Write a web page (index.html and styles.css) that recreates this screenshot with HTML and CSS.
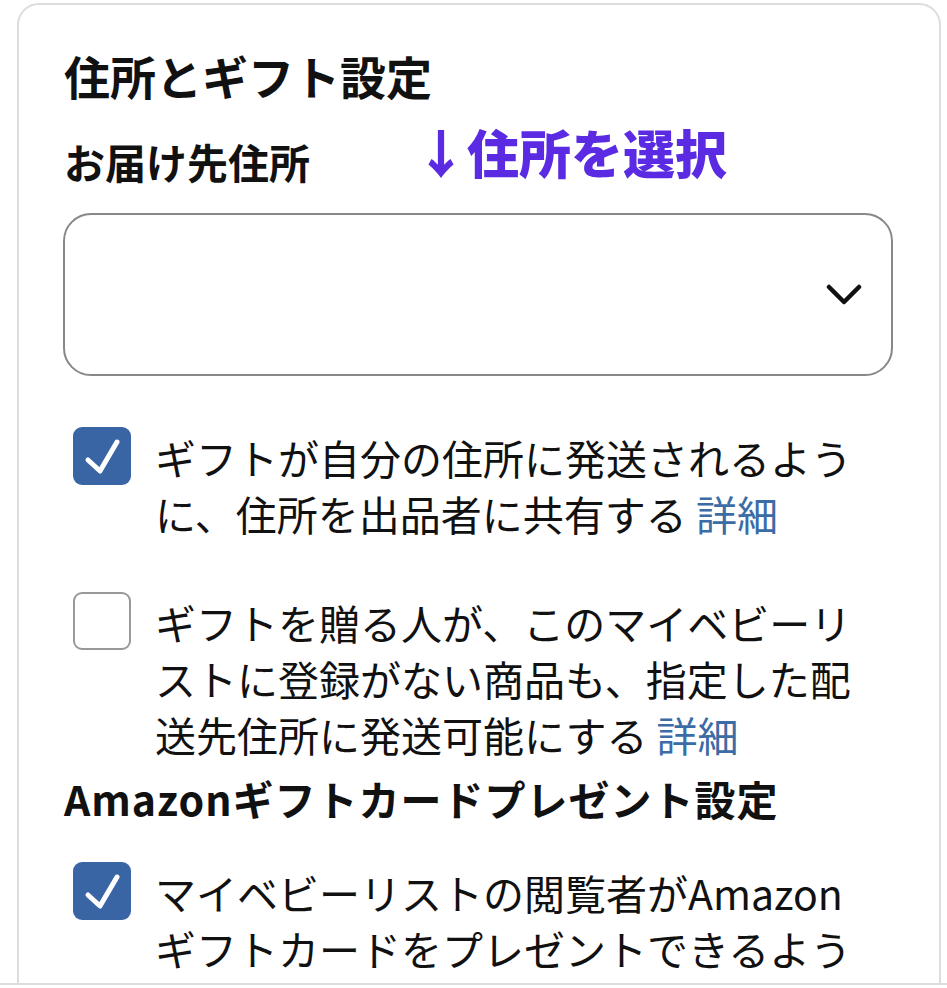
FILE: index.html
```html
<!DOCTYPE html>
<html lang="ja">
  <head>
    <meta charset="utf-8" />
    <title>住所とギフト設定</title>
    <link rel="stylesheet" href="styles.css">
  </head>
  <body>
    <div class="screen">
      <div class="card">
        <h1 class="title">住所とギフト設定</h1>

        <div class="label-row">
          <div class="label">お届け先住所</div>
          <div class="hint">↓住所を選択</div>
        </div>

        <!-- Address dropdown -->
        <div class="select">
          <svg class="chevron" width="36" height="22" viewBox="0 0 36 22">
            <polyline points="3,3 18,18 33,3" fill="none" stroke="#111" stroke-width="4.5" stroke-linecap="round" stroke-linejoin="round" />
          </svg>
        </div>

        <div class="option option-first">
          <span class="checkbox checked">
            <svg width="58" height="58" viewBox="0 0 58 58">
              <polyline points="15,33 27,44 44,15" fill="none" stroke="#fff" stroke-width="5" stroke-linecap="round" stroke-linejoin="round" />
            </svg>
          </span>
          <p class="option-text">ギフトが自分の住所に発送されるように、住所を出品者に共有する <a href="#" class="more">詳細</a></p>
        </div>

        <div class="option">
          <span class="checkbox"></span>
          <p class="option-text">ギフトを贈る人が、このマイベビーリストに登録がない商品も、指定した配送先住所に発送可能にする <a href="#" class="more">詳細</a></p>
        </div>

        <h2 class="section-title">Amazonギフトカードプレゼント設定</h2>

        <div class="option option-gift">
          <span class="checkbox checked">
            <svg width="58" height="58" viewBox="0 0 58 58">
              <polyline points="15,33 27,44 44,15" fill="none" stroke="#fff" stroke-width="5" stroke-linecap="round" stroke-linejoin="round" />
            </svg>
          </span>
          <p class="option-text">マイベビーリストの閲覧者がAmazonギフトカードをプレゼントできるよう</p>
        </div>
      </div>
    </div>
  </body>
</html>
```

FILE: styles.css
```css
body {
  margin: 0;
  padding: 0;
  background: #fff;
  color: #111;
  font-family: "Noto Sans CJK JP", "Noto Sans", sans-serif;
}

/* Visible area, cut off with a thin rule */
.screen {
  height: 983px;
  overflow: hidden;
  border-bottom: 2px solid #ddd;
}

/* Card */
.card {
  box-sizing: border-box;
  width: 924px;
  margin: 3px 0 0 17px;
  padding: 42px 46px 60px 45px;
  border: 2px solid #ddd;
  border-radius: 22px;
}

.title {
  margin: 0;
  font-size: 46px;
  font-weight: 700;
  line-height: 56px;
}

/* Label with the purple hint next to it */
.label-row {
  display: flex;
  align-items: flex-end;
  margin-top: 21px;
}

.label {
  font-size: 41px;
  font-weight: 700;
  line-height: 56px;
}

.hint {
  margin: 0 0 9px 105px;
  color: #5a2be2;
  font-size: 52px;
  font-weight: 900;
  line-height: 56px;
}

/* Dropdown */
.select {
  box-sizing: border-box;
  display: flex;
  align-items: center;
  justify-content: flex-end;
  height: 163px;
  margin: 24px 0 0 -1px;
  padding-right: 29px;
  border: 2px solid #888;
  border-radius: 28px;
}

.chevron {
  display: block;
}

/* Checkbox rows */
.option {
  display: flex;
  align-items: flex-start;
  margin-top: 51px;
}

.option-gift {
  margin-top: 40px;
}

.checkbox {
  box-sizing: border-box;
  flex: none;
  width: 58px;
  height: 58px;
  margin-left: 9px;
  border: 2px solid #999;
  border-radius: 9px;
  background: #fff;
}

.checkbox.checked {
  border: none;
  background: #3a65a5;
}

.checkbox svg {
  display: block;
}

.option-text {
  max-width: 705px;
  margin: 2px 0 0 24px;
  font-size: 41px;
  line-height: 56px;
}

.more {
  color: #3b6ca6;
  text-decoration: none;
}

.section-title {
  margin: 12px 0 0;
  font-size: 41px;
  font-weight: 700;
  line-height: 48px;
  letter-spacing: 1px;
}
```
